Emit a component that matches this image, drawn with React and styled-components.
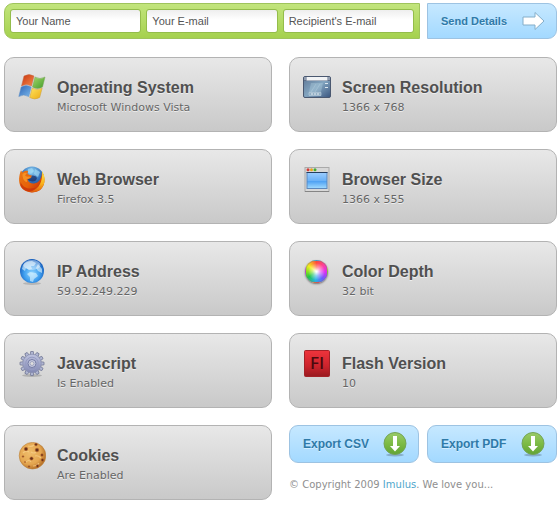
import styled, { createGlobalStyle } from "styled-components";

const GlobalStyle = createGlobalStyle`
    * {
        box-sizing: border-box;
    }
    body {
        margin: 0;
        background: white;
        font-family: "DejaVu Sans", Verdana, sans-serif;
    }
    h2, p {
        margin: 0;
    }
`
const Page = styled.main`
    padding: 3px 2px 5px 4px;
`
const SendForm = styled.form`
    display: flex;
    gap: 7px;
    margin-bottom: 18px;
`
const Fields = styled.div`
    flex: 1;
    min-width: 0;
    display: flex;
    gap: 5px;
    padding: 5px;
    border: 1px solid #9fc45c;
    border-radius: 9px 0 0 9px;
    background: linear-gradient(#c2e57c, #a5d14e);
`
const Field = styled.input`
    flex: 1;
    min-width: 0;
    height: 24px;
    padding: 0 5px;
    border: 1px solid #94bd4b;
    border-radius: 3px;
    background: linear-gradient(#eeeeee, white 10px);
    color: #555;
    font-family: "Liberation Sans", Arial, sans-serif;
    font-size: 11px;
    &::placeholder {
        color: #555;
        opacity: 1;
    }
`
const Button = styled.button`
    flex: 1;
    display: flex;
    align-items: center;
    justify-content: space-between;
    height: 38px;
    padding: 0 11px 0 13px;
    border: 1px solid #9dc3e2;
    border-radius: 9px;
    background: linear-gradient(#c6e8ff, #a3d9ff);
    color: #2f7aa8;
    font-family: "Liberation Sans", Arial, sans-serif;
    font-size: 12px;
    font-weight: bold;
    white-space: nowrap;
    text-shadow: 0 1px 0 #d5eeff;
    cursor: pointer;
    &:hover {
        background: #b9e2ff;
    }
`
const SendButton = styled(Button)`
    flex: 0 0 130px;
    height: 36px;
    border-radius: 0 9px 9px 0;
    font-size: 11px;
`
const Grid = styled.div`
    display: grid;
    grid-template-columns: 1fr 1fr;
    gap: 17px;
`
const Card = styled.section`
    display: flex;
    gap: 11px;
    height: 75px;
    padding: 16px 13px;
    border: 1px solid #b3b3b3;
    border-radius: 10px;
    background: linear-gradient(#e8e8e8, #c9c9c9);
`
const IconBox = styled.div`
    flex: none;
    width: 28px;
    height: 28px;
    svg {
        display: block;
    }
`
const Title = styled.h2`
    margin-top: 4px;
    color: #505050;
    font-family: "Liberation Sans", Arial, sans-serif;
    font-size: 16px;
    font-weight: bold;
    line-height: 20px;
    text-shadow: 0 1px 0 #eee;
`
const Value = styled.p`
    color: #666;
    font-size: 11px;
    line-height: 20px;
    text-shadow: 0 1px 0 #eee;
`
const Exports = styled.div`
    display: flex;
    gap: 8px;
`
const Copyright = styled.p`
    margin-top: 14px;
    color: #8f8f8f;
    font-size: 10px;
    line-height: 16px;
    a {
        color: #4fa6cc;
        text-decoration: none;
    }
`
const Wheel = styled.div`
    width: 23px;
    height: 23px;
    margin: 2px;
    border: 1px solid rgba(120, 120, 120, .4);
    border-radius: 50%;
    background:
        radial-gradient(circle, white 3%, rgba(255, 255, 255, .45) 28%, rgba(255, 255, 255, 0) 58%),
        conic-gradient(#ff4a3a, #ff3fa0 50deg, #e02bf0 90deg, #6a5cff 140deg, #28b4e8 185deg, #1fc64a 235deg, #7fe01c 265deg, #f5ee1c 305deg, #ff4a3a);
    box-shadow: 0 1px 2px rgba(0, 0, 0, .45);
`

const WindowsIcon = () => (
    <svg width="28" height="28" viewBox="0 0 28 28" aria-hidden="true">
        <defs>
            <linearGradient id="winRed" x1="0" y1="0" x2="1" y2="1"><stop stopColor="#c8340f" /><stop offset="1" stopColor="#f58a4a" /></linearGradient>
            <linearGradient id="winGreen" x1="0" y1="0" x2="1" y2="1"><stop stopColor="#a6d66b" /><stop offset="1" stopColor="#3f9c28" /></linearGradient>
            <linearGradient id="winBlue" x1="0" y1="0" x2="1" y2="1"><stop stopColor="#2f64b5" /><stop offset="1" stopColor="#79b8ec" /></linearGradient>
            <linearGradient id="winYellow" x1="0" y1="0" x2="1" y2="1"><stop stopColor="#ffe45e" /><stop offset="1" stopColor="#ecaa12" /></linearGradient>
        </defs>
        <path d="M6 2Q11 -1 16 2L13.500 12Q8.500 9 3.500 12Z" fill="url(#winRed)" stroke="#c36a48" strokeWidth=".5" />
        <path d="M17 3Q22 6 27 3L24.500 13Q19.500 16 14.500 13Z" fill="url(#winGreen)" stroke="#77a556" strokeWidth=".5" />
        <path d="M3.200 13Q8.200 10 13.200 13L10.700 22.500Q5.700 19.500 .8 22.500Z" fill="url(#winBlue)" stroke="#5f8fc4" strokeWidth=".5" />
        <path d="M14.200 14Q19.200 17 24.200 14L21.700 23.500Q16.700 26.500 11.700 23.500Z" fill="url(#winYellow)" stroke="#c9a044" strokeWidth=".5" />
    </svg>
)
const ScreenIcon = () => (
    <svg width="28" height="28" viewBox="0 0 28 28" aria-hidden="true">
        <defs>
            <linearGradient id="screen" x1="0" y1="0" x2="1" y2="1"><stop stopColor="#5d7694" /><stop offset=".5" stopColor="#83a5c0" /><stop offset="1" stopColor="#39557f" /></linearGradient>
        </defs>
        <rect x=".5" y="2.500" width="27" height="21" rx="1.500" fill="url(#screen)" stroke="#4a5870" />
        <path d="M1 3h26v4H1z" fill="#61718a" />
        <path d="M3.500 3h21v3.500h-21z" fill="#f1f3f5" />
        <path d="M1.500 3h1v3h-1zM25.500 3h1v3h-1z" fill="#c1cad5" />
        <path d="M8 9h12l-2 9H6z" fill="#b5d3e2" opacity=".35" />
        <path d="M8 18l5-8M12 18l5-8" stroke="#c6dce8" strokeWidth=".8" opacity=".4" />
        <path d="M22 9.500h3M22 13.500h3" stroke="#dce7ef" strokeWidth="1.200" />
        <path d="M6 18.500h12v3H6z" fill="#91afc5" stroke="#b7cbdb" strokeWidth=".7" />
        <path d="M8 20h2M11 20h2M14 20h2" stroke="#e4edf3" strokeWidth="1" />
    </svg>
)
const FirefoxIcon = () => (
    <svg width="28" height="28" viewBox="0 0 28 28" aria-hidden="true">
        <defs>
            <radialGradient id="ffGlobe" cx=".5" cy=".2" r=".8"><stop stopColor="#8ed0f3" /><stop offset=".5" stopColor="#3474bd" /><stop offset="1" stopColor="#16245f" /></radialGradient>
            <linearGradient id="ffFox" x1="0" y1="0" x2="1" y2=".7"><stop stopColor="#e97816" /><stop offset=".55" stopColor="#e76109" /><stop offset="1" stopColor="#c22e0a" /></linearGradient>
            <linearGradient id="ffTail" x1="0" y1="0" x2="0" y2="1"><stop stopColor="#ffe54a" /><stop offset=".6" stopColor="#f9b21b" /><stop offset="1" stopColor="#df5a0c" /></linearGradient>
        </defs>
        <circle cx="14" cy="12.500" r="12" fill="url(#ffGlobe)" />
        <path d="M10 3l4-1 2 3-3 3-3-1zM17 3l5 3-2 5-4-3z" fill="#a5dcf4" opacity=".65" />
        <path d="M24 6C28 12 27 20 22 24C16 28 7 27 3 21C0 16 1 9 3 4.500L4.500 6.500C6 5 8 4.500 10 5L9.500 8C11 9 12 9 14 9.500L13 12L9.500 13.500C11 18 16 18.500 20 16C22.500 14 24 10 24 6Z" fill="url(#ffFox)" />
        <path d="M24 5C28.500 12 27 20 22 24C19 26 15 26.500 12 26C17 24 20 22 22 18C24 14 24.500 9 24 5Z" fill="url(#ffTail)" />
        <path d="M2.500 16C5 22 11 24 18 21.500C13 28 4 25.500 2.500 19Z" fill="#c9330a" opacity=".8" />
        <path d="M14 9.500Q18 9 19 12Q18 16 14 15.500Q11 15 9.500 13.500L13 12Z" fill="#172a63" opacity=".7" />
        <path d="M4.500 8Q7 6 9 7L7 9.500Q8 11 11 10.500L13 11Q11 13 8.500 13Q10 16 8 16Q4 13 4.500 8Z" fill="#f89a2c" opacity=".8" />
    </svg>
)
const BrowserIcon = () => (
    <svg width="28" height="28" viewBox="0 0 28 28" aria-hidden="true">
        <defs>
            <linearGradient id="browser" x1="0" y1="0" x2="0" y2="1"><stop stopColor="#9dceff" /><stop offset=".5" stopColor="#6cb2f7" /><stop offset=".51" stopColor="#479cf2" /><stop offset="1" stopColor="#a3dcff" /></linearGradient>
        </defs>
        <rect x="2" y="1.500" width="24" height="24" fill="#d8d8d8" stroke="#aaa" />
        <path d="M2 25.500h24" stroke="#858585" />
        <rect x="4" y="6.500" width="20" height="16" fill="url(#browser)" stroke="#5c87bb" />
        <path d="M3.500 6.500h21" stroke="#263f60" />
        <circle cx="5" cy="3.800" r="1.500" fill="#d63b34" />
        <circle cx="8.500" cy="3.800" r="1.500" fill="#e9a51e" />
        <circle cx="12" cy="3.800" r="1.500" fill="#45ad32" />
    </svg>
)
const GlobeIcon = () => (
    <svg width="28" height="28" viewBox="0 0 28 28" aria-hidden="true">
        <defs>
            <radialGradient id="globe" cx=".5" cy=".6" r=".55"><stop stopColor="#91d6ff" /><stop offset=".6" stopColor="#3f9fef" /><stop offset="1" stopColor="#1860bd" /></radialGradient>
        </defs>
        <ellipse cx="14" cy="25.500" rx="9" ry="1.500" fill="#777" opacity=".35" />
        <circle cx="14" cy="13" r="12" fill="url(#globe)" />
        <path d="M5 7Q8 3 14 3L18 5L16 8L13 8L14 11L11 12L8 10L7 13L4 11ZM12 14L18 15L20 18L16 21L15 24L12 23L12 19L9 16ZM20 6L24 11L24 15L20 13L18 10Z" fill="#e3f6ff" opacity=".6" />
        <ellipse cx="14" cy="7" rx="8.500" ry="5" fill="white" opacity=".4" />
    </svg>
)
const GearIcon = () => (
    <svg width="28" height="28" viewBox="0 0 28 28" aria-hidden="true">
        <defs>
            <linearGradient id="gear" x1="0" y1="0" x2="0" y2="1"><stop stopColor="#bfc4df" /><stop offset="1" stopColor="#8288b2" /></linearGradient>
        </defs>
        <ellipse cx="14" cy="25.500" rx="10" ry="1.500" fill="#777" opacity=".4" />
        {[0, 30, 60, 90, 120, 150, 180, 210, 240, 270, 300, 330].map(angle => (
            <path key={angle} d="M12.200 5L12.700 1.500H15.300L15.800 5Z" fill="#b2b8d4" stroke="#737996" strokeWidth=".8" transform={`rotate(${angle} 14 13.500)`} />
        ))}
        <circle cx="14" cy="13.500" r="9.300" fill="url(#gear)" stroke="#8b91b1" strokeWidth=".7" />
        <circle cx="14" cy="13.500" r="6.300" fill="none" stroke="#959bc3" strokeWidth="1" />
        <circle cx="14" cy="13.500" r="4" fill="#c9cce0" stroke="#747ba5" strokeWidth="1" />
        <circle cx="14" cy="13.500" r="2" fill="#dedede" stroke="#8b91b1" strokeWidth=".7" />
    </svg>
)
const FlashIcon = () => (
    <svg width="28" height="28" viewBox="0 0 28 28" aria-hidden="true">
        <defs>
            <linearGradient id="flash" x1="0" y1="0" x2="0" y2="1"><stop stopColor="#ee343c" /><stop offset=".6" stopColor="#cc232c" /><stop offset="1" stopColor="#981a20" /></linearGradient>
        </defs>
        <rect x="1.500" y=".5" width="25" height="26" rx="1" fill="url(#flash)" stroke="#a32228" />
        <text x="14" y="19" textAnchor="middle" fill="#4b0a0e" fontFamily="Open Sans, sans-serif" fontWeight="600" fontSize="17">Fl</text>
    </svg>
)
const CookieIcon = () => (
    <svg width="28" height="28" viewBox="0 0 28 28" aria-hidden="true">
        <defs>
            <radialGradient id="cookie" cx=".4" cy=".4" r=".6"><stop stopColor="#efbd6b" /><stop offset=".7" stopColor="#e4a650" /><stop offset="1" stopColor="#ba752b" /></radialGradient>
        </defs>
        <circle cx="14.500" cy="13.700" r="13.300" fill="url(#cookie)" stroke="#b97d36" strokeWidth=".6" />
        <path d="M5 11q3-3 6-1M10 4q4 1 6-1M13 10q3 2 5 0M8 20q3-3 5 0M17 14q3-1 6 2M15 24q4 0 6-3" fill="none" stroke="#f8d18b" strokeWidth="1.200" opacity=".7" />
        {[[8, 7, 1.7], [19, 8, 1.8], [13.5, 16.500, 1.6], [18, 2.5, 1.3], [24, 13, 1.2], [24.500, 18, 1.3], [5, 14.500, .8], [19.500, 24, 1.2], [11, 24.500, .8], [7, 20, .5]].map(([x, y, r]) => (
            <circle key={`${x}-${y}`} cx={x} cy={y} r={r} fill="#63301a" stroke="#b3602a" strokeWidth=".6" />
        ))}
    </svg>
)
const ArrowIcon = () => (
    <svg width="23" height="20" viewBox="0 0 23 20" aria-hidden="true">
        <path d="M1 6H13V1.500L22 10L13 18.500V14H1Z" fill="white" stroke="#84aec9" />
    </svg>
)
const DownloadIcon = () => (
    <svg width="24" height="26" viewBox="0 0 24 26" aria-hidden="true">
        <defs>
            <linearGradient id="download" x1="0" y1="0" x2="0" y2="1"><stop stopColor="#9aca69" /><stop offset=".5" stopColor="#7dbb45" /><stop offset="1" stopColor="#62a433" /></linearGradient>
        </defs>
        <ellipse cx="12" cy="24" rx="9" ry="1.500" fill="#638096" opacity=".5" />
        <circle cx="12" cy="12.500" r="11" fill="url(#download)" stroke="#73a457" />
        <path d="M10 5H14V15H17L12 20.500L7 15H10Z" fill="white" />
    </svg>
)

const cards = [
    { title: "Operating System", value: "Microsoft Windows Vista", icon: <WindowsIcon /> },
    { title: "Screen Resolution", value: "1366 x 768", icon: <ScreenIcon /> },
    { title: "Web Browser", value: "Firefox 3.5", icon: <FirefoxIcon /> },
    { title: "Browser Size", value: "1366 x 555", icon: <BrowserIcon /> },
    { title: "IP Address", value: "59.92.249.229", icon: <GlobeIcon /> },
    { title: "Color Depth", value: "32 bit", icon: <Wheel /> },
    { title: "Javascript", value: "Is Enabled", icon: <GearIcon /> },
    { title: "Flash Version", value: "10", icon: <FlashIcon /> },
    { title: "Cookies", value: "Are Enabled", icon: <CookieIcon /> },
]
const fields = [
    { name: "name", type: "text", label: "Your Name" },
    { name: "email", type: "email", label: "Your E-mail" },
    { name: "recipient", type: "email", label: "Recipient's E-mail" },
]

const InfoCard = ({data}) =>{
    return(
        <Card>
            <IconBox>{data.icon}</IconBox>
            <div>
                <Title>{data.title}</Title>
                <Value>{data.value}</Value>
            </div>
        </Card>
    )
}

const App = () =>{
    return(
        <Page>
            <GlobalStyle />
            <SendForm onSubmit={e => e.preventDefault()}>
                <Fields>
                    {fields.map(field => (
                        <Field key={field.name} name={field.name} type={field.type} placeholder={field.label} aria-label={field.label} />
                    ))}
                </Fields>
                <SendButton type="submit">Send Details <ArrowIcon /></SendButton>
            </SendForm>
            <Grid>
                {cards.map(card => <InfoCard key={card.title} data={card} />)}
                <div>
                    <Exports>
                        <Button type="button">Export CSV <DownloadIcon /></Button>
                        <Button type="button">Export PDF <DownloadIcon /></Button>
                    </Exports>
                    <Copyright>© Copyright 2009 <a href="#imulus">Imulus</a>. We love you...</Copyright>
                </div>
            </Grid>
        </Page>
    )
}

export default App
